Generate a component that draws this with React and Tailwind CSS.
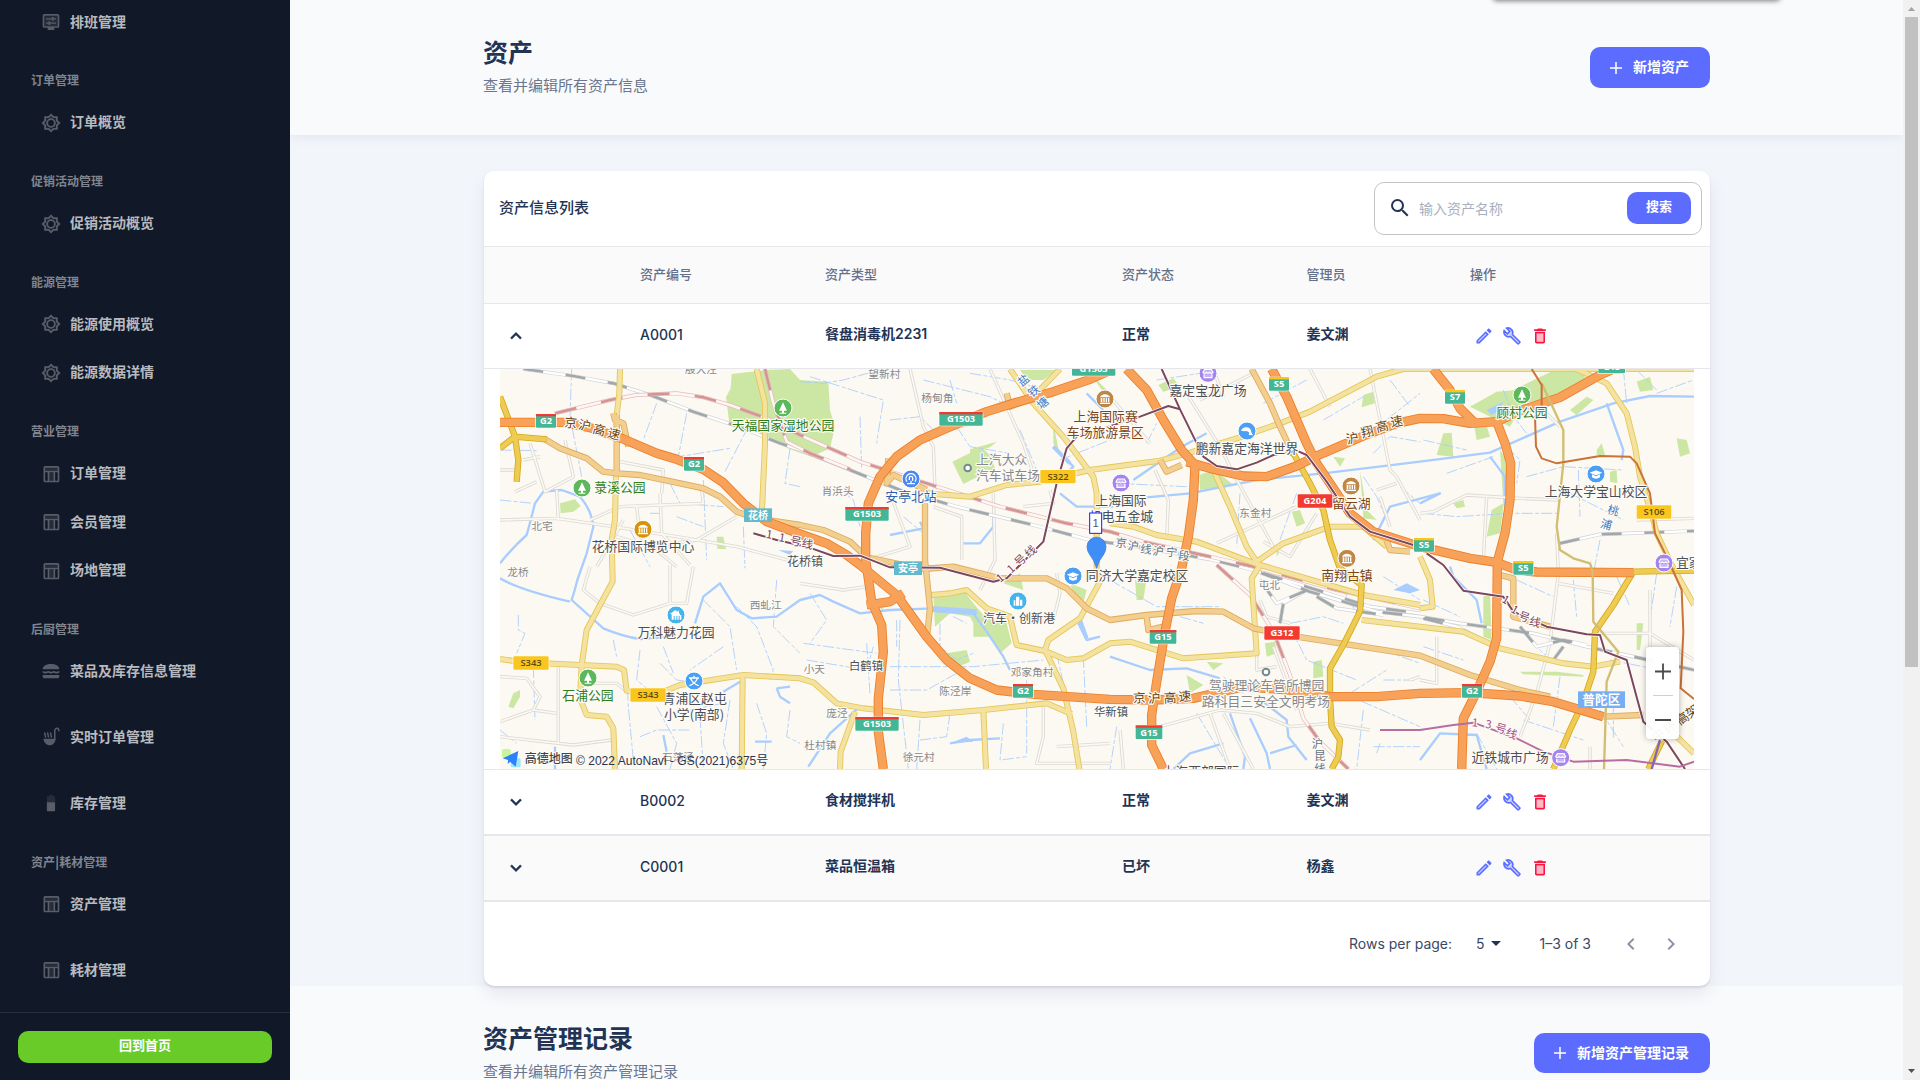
import React from "react";

/* ---------- icons ---------- */
const TwoTone = ({ children, className = "size-5" }) => (
  <svg viewBox="0 0 24 24" className={className} fill="currentColor">{children}</svg>
);
const Gear = () => (
  <TwoTone className="size-[20px]">
    <path d="M18 14.48V18h-3.52L12 20.48 9.52 18H6v-3.52L3.52 12 6 9.52V6h3.52L12 3.52 14.48 6H18v3.52L20.48 12z" opacity=".15" />
    <path d="M12 2.1 14.9 5H19v4.100L21.900 12 19 14.900V19h-4.100L12 21.900 9.100 19H5v-4.100L2.100 12 5 9.100V5h4.100z" fill="none" stroke="currentColor" strokeWidth="2.200" />
    <circle cx="12" cy="12" r="4.600" fill="#111827" stroke="currentColor" strokeWidth="2.200" />
  </TwoTone>
);
const Table = () => (
  <TwoTone className="size-[20px]">
    <path d="M4 4h17v4H4zM9.500 10h6v10h-6z" opacity=".3" />
    <path d="M20 2.500H5c-1.100 0-2 .9-2 2V20c0 1.100.9 2 2 2h15c1.100 0 2-.9 2-2V4.500c0-1.100-.9-2-2-2zm0 2v3.500H5V4.500h15zM15 20h-5V10h5v10zM5 10h3v10H5V10zm12 10V10h3v10h-3z" />
  </TwoTone>
);
const Display = () => (
  <TwoTone className="size-[20px]">
    <path d="M4 5h16v12H4z" opacity=".3" />
    <path d="M20 2.500H4c-1.100 0-2 .9-2 2V17c0 1.100.9 2 2 2h4v2.500h8V19h4c1.100 0 2-.9 2-2V4.500c0-1.100-.9-2-2-2zM20 17H4V4.500h16V17zM6 7.500h7V6h2v1.500h3V9h-3v1.500h-2V9H6zM6 12.500h3V11h2v1.500h7V14h-7v1.500H9V14H6z" />
  </TwoTone>
);
const Burger = () => (
  <TwoTone className="size-[20px]">
    <path d="M2 10C2 5.500 7 3.500 12 3.500s10 2 10 6.500zM2 16.800h20v1.700c0 1.200-.9 2.200-2 2.200H4c-1.100 0-2-1-2-2.200z" />
    <path d="M2 13c1.700 0 1.700 1 3.300 1s1.700-1 3.400-1 1.600 1 3.300 1 1.700-1 3.300-1 1.700 1 3.400 1 1.600-1 3.300-1" fill="none" stroke="currentColor" strokeWidth="2" />
  </TwoTone>
);
const Soup = () => (
  <TwoTone className="size-[20px]">
    <path d="M3 14h14.500c0 4-3 8-7 8S3 18 3 14z" />
    <path d="M16.500 15V5c0-2 1-3.500 2.700-3.500S21.500 3 21.500 5M5.500 12.500c0-2.500-1-2.500-1-6M9 12.500c0-2.500-1-2.500-1-6M12.500 12.500c0-2.500-1-2.500-1-6" fill="none" stroke="currentColor" strokeWidth="1.800" />
  </TwoTone>
);
const Battery = () => (
  <TwoTone className="size-[20px]">
    <path d="M17 5.300C17 4.600 16.400 4 15.700 4H14V2h-4v2H8.300C7.600 4 7 4.600 7 5.300V11h10V5.300z" opacity=".3" />
    <path d="M7 11v9.700c0 .7.6 1.300 1.300 1.300h7.300c.7 0 1.300-.6 1.300-1.300V11H7z" />
  </TwoTone>
);
const Edit = () => (
  <TwoTone>
    <path d="M5 18.080V19h.92l9.060-9.060-.92-.92z" opacity=".3" />
    <path d="M20.710 7.040c.39-.39.39-1.020 0-1.410l-2.340-2.340c-.2-.2-.45-.29-.71-.29s-.51.1-.7.29l-1.830 1.830 3.750 3.750 1.830-1.830zM3 17.250V21h3.750L17.810 9.940l-3.750-3.750L3 17.250zM5.920 19H5v-.92l9.060-9.060.92.92L5.920 19z" />
  </TwoTone>
);
const Wrench = () => (
  <TwoTone>
    <path d="M21.300 18.900l-8.700-8.700c.8-2.200.3-4.600-1.400-6.200C9.600 2.400 7.400 2 5.400 2.600L9.300 6.400 6.400 9.300 2.600 5.400C2 7.400 2.400 9.600 4 11.200c1.600 1.700 4 2.200 6.200 1.400l8.700 8.700c.3.3.6.3.9 0l1.500-1.500c.3-.3.3-.6 0-.9z" fillOpacity=".3" stroke="currentColor" strokeWidth="1.900" />
  </TwoTone>
);
const Trash = () => (
  <TwoTone>
    <path d="M8 9h8v10H8z" opacity=".3" />
    <path d="M15.500 4l-1-1h-5l-1 1H5v2h14V4zM6 19c0 1.100.9 2 2 2h8c1.100 0 2-.9 2-2V7H6v12zM8 9h8v10H8V9z" />
  </TwoTone>
);
const Plus = () => (
  <TwoTone className="size-[18px]"><path d="M20 13h-7v7h-2v-7H4v-2h7V4h2v7h7z" /></TwoTone>
);
const Chevron = ({ up }) => (
  <svg viewBox="0 0 24 24" className="size-[22px]" fill="currentColor" stroke="currentColor" strokeWidth=".5">
    {up ? <path d="M7.410 15.410 12 10.830l4.590 4.580L18 14l-6-6-6 6z" /> : <path d="M7.410 8.590 12 13.170l4.590-4.580L18 10l-6 6-6-6z" />}
  </svg>
);

/* ---------- sidebar ---------- */
const NAV = [
  ["item", "排班管理", Display, "mt-0"],
  ["head", "订单管理"],
  ["item", "订单概览", Gear, "mt-0"],
  ["head", "促销活动管理"],
  ["item", "促销活动概览", Gear, "mt-0"],
  ["head", "能源管理"],
  ["item", "能源使用概览", Gear, "mt-0"],
  ["item", "能源数据详情", Gear, "mt-[8.500px]"],
  ["head", "营业管理"],
  ["item", "订单管理", Table, "mt-0"],
  ["item", "会员管理", Table, "mt-[8.500px]"],
  ["item", "场地管理", Table, "mt-[8.500px]"],
  ["head", "后厨管理"],
  ["item", "菜品及库存信息管理", Burger, "mt-0"],
  ["item", "实时订单管理", Soup, "mt-[26px]"],
  ["item", "库存管理", Battery, "mt-[26px]"],
  ["head", "资产|耗材管理"],
  ["item", "资产管理", Table, "mt-0"],
  ["item", "耗材管理", Table, "mt-[26px]"],
];

function Sidebar() {
  return (
    <aside className="flex h-full w-[290px] shrink-0 flex-col bg-[#111827]">
      <nav className="flex h-[1012px] flex-col pt-[2px]">
        {NAV.map(([kind, label, Icon, gap], i) =>
          kind === "head" ? (
            <div key={i} className="mt-[16.500px] flex h-[44.300px] shrink-0 items-center pl-[31px] pt-px text-[12px] font-semibold text-[#7f848e]">{label}</div>
          ) : (
            <div key={i} className={"flex h-10 shrink-0 items-center gap-[9px] pl-[41px] text-[14px] font-bold text-[#b8babf] " + gap}>
              <span className="text-[#585d68]"><Icon /></span>
              <span className="-mt-[2px]">{label}</span>
            </div>
          )
        )}
      </nav>
      <div className="flex-1 border-t border-[#292f3d] px-[18px] pt-[18px]">
        <button className="flex h-8 w-full items-center justify-center rounded-[10px] bg-[#68cb27] pb-[2px] text-[13px] font-bold text-white">回到首页</button>
      </div>
    </aside>
  );
}

/* ---------- map ---------- */
const PARKS = [
  "M725 42 830 30 900 27 930 60 1015 65 1020 150 1035 200 1020 265 965 290 900 268 830 232 718 190 708 112 722 85z",
  "M1387 305 1475 262 1500 285 1515 325 1420 372z", "M1440 268 1520 245 1500 262 1440 282z",
  "M210 430 255 418 272 438 250 455 212 460z", "M680 530 700 530 708 568 682 566z",
  "M1330 708 1420 690 1450 730 1480 765 1550 790 1565 850 1530 880 1500 830 1450 830 1450 790 1440 770 1380 760 1335 800z",
  "M1370 880 1430 870 1440 905 1405 920z", "M1540 670 1590 640 1600 690z", "M1740 670 1790 690 1780 730 1750 700z",
  "M2128 345 2170 330 2200 350 2230 375 2130 390z", "M1935 660 1970 655 1960 720 1940 720z", "M2005 75 2050 55 2070 80 2020 95z",
  "M2620 105 2650 95 2655 130 2615 142z", "M2405 455 2430 450 2445 490 2420 500z", "M2325 850 2355 845 2360 880 2330 890z",
  "M2150 905 2200 910 2170 930z", "M2470 905 2495 900 2500 950 2470 955z", "M2090 945 2140 975 2100 1000z", "M2530 290 2565 295 2550 320z",
  "M2940 140 3020 95 3080 90 3100 130 3060 200 2990 165z", "M3070 90 3200 27 3270 27 3290 60 3170 120 3090 130z",
  "M2950 185 2985 180 3000 230 2960 240z", "M2860 220 2885 218 2890 290 2840 285z", "M3030 270 3050 300 3045 400 3030 520 2990 530 3005 450 3040 430z",
  "M3440 65 3480 50 3490 90 3450 95z", "M3240 150 3290 110 3310 120 3260 165z", "M3320 270 3335 250 3345 285 3320 285z", "M3360 335 3380 330 3382 370 3360 365z",
  "M3560 235 3590 240 3600 280 3570 290z", "M2980 710 3000 700 3005 840 2980 830z", "M3090 935 3200 935 3280 945 3280 950 3100 943z", "M3440 790 3460 790 3450 870 3440 870z",
  "M55 1040 70 1000 90 990 90 1010 70 1045z", "M2890 430 2920 420 2925 440 2900 445z", "M1170 740 1185 740 1175 750z", "M1800 40 1860 100 1850 110z",
  "M1690 190 1700 240 1710 290 1690 250z", "M1590 30 1700 30 1660 60 1610 60z", "M2360 560 2372 570 2360 590z", "M2610 330 2630 450 2660 480 2620 475z",
];
const WATER = [
  "M30 610Q70 560 110 525 120 490 135 430L160 395 215 390 270 410Q305 450 310 500L290 580 262 660Q255 690 245 720L340 805Q400 830 450 837L540 830",
  "M30 655Q90 690 240 725", "M615 790 640 710 690 670 740 750 785 775 860 770 930 720 990 705 1030 725 1110 760 1200 750 1330 745 1460 760",
  "M1450 760 1490 815 1540 890 1560 930", "M2650 540 2700 440 2850 400 2790 430", "M2790 305 3000 278 3210 185 3370 130 3480 108 3612 110",
  "M1970 412 2100 400 2300 360 2500 340 2790 305", "M1930 360 2075 260 2150 220", "M1860 890 1980 930 2090 925 2190 955", "M2280 1075 2330 1180 2340 1227",
  "M2220 1060 2265 1190 2260 1227", "M955 1220 1020 1120 1110 1040", "M1380 1150 1440 1140 1530 1135", "M2790 1200 2850 1120 2960 1125 2990 1227",
  "M2340 1180 2420 1155M2300 1010 2390 1080 2395 1130 2450 1200", "M1200 525 1300 505 1290 485M1420 550 1470 550 1510 500 1510 460", "M195 1160 195 1227",
  "M1790 100 1840 150M1690 260 1750 320 1720 350M1710 400 1760 440 1870 440M1765 790 1790 840 1830 830",
  "M3000 290 3045 350 3045 440M3350 130 3400 270 3395 300", "M520 1125 530 1175M700 995 750 965M860 985 900 980M795 1145 845 1145M2050 1227 2100 1180 2200 1150",
  "M860 985 870 1010 900 1030M2880 620 2890 650 2960 720 2975 790",
];
const STREAMS = [
  "M245 27 240 170 275 350M30 420 130 430M1230 780 1225 960 1255 1227",
  "M500 130 460 240M590 160 565 290 720 265M775 200 705 335M900 265 885 370 930 380M540 370 570 430 700 440M640 360 650 600M760 500 765 625M480 460 510 460M30 270 140 272M560 470 640 500M420 510 480 620",
  "M960 50 1180 120 1160 250M930 65 1000 70 1060 60 1180 27M1110 170 1115 330M1200 180 1290 170 1350 230M1440 40 1560 60 1700 100M1300 60 1500 110 1560 140M1590 210 1640 330M1400 200 1440 260 1560 280M1040 380 1090 420 1110 500M1240 470 1300 520M1380 60 1400 130M1710 300 1860 240",
  "M2000 60 2130 40 2160 60M2180 90 2250 70M2320 130 2450 60M2600 250 2790 100M2620 350 2660 410 2700 500M2500 180 2620 110M2250 400 2240 560M1880 370 2090 380M1970 250 2000 190M2650 280 2700 230 2790 245M2420 400 2370 540M2700 60 2760 140M2730 380 2790 430",
  "M2800 240 2930 270M2870 340 3010 290M2800 460 2900 470 3060 460 3210 460M3110 350 3220 320 3400 330M3040 90 3070 170 3110 220M3265 330 3270 470M3400 27 3410 130M3500 100 3610 60M3330 540 3310 640M3050 260 3090 300 3080 370M3240 400 3400 480M3440 30 3500 90",
  "M85 765 85 810 105 820 80 880M130 920 135 1080M30 1110 80 1150M410 930 415 1040 430 1200M450 870 440 960 500 1010M510 910 560 960 640 970M500 1040 560 1150 540 1227M640 720 720 800 740 930M740 740 800 800 850 930 840 960M860 660 850 800 930 880M700 860 600 930M520 860 550 940M630 1070 640 1227M720 1020 700 1150 730 1227M450 1130 500 1110 600 1110M800 1030 830 1120 820 1227M900 1050 890 1130 930 1150M370 840 380 890M600 1050 700 1030",
  "M940 850 1160 880M950 900 1130 930 1150 860M960 700 1010 780 960 850M1200 920 1450 920 1660 900M1200 990 1310 990 1400 940M1290 1080 1280 1227M1380 1060 1370 1130 1290 1140M1540 1090 1530 1200 1610 1190M1610 920 1610 1180M1130 850 1140 1000M1220 780 1220 860M1780 890 1790 1100M1350 790 1350 860 1400 900 1450 880M1390 770 1430 790M1700 880 1720 970",
  "M1860 660 2000 740 2190 740M2070 770 2140 790M2400 790 2500 770 2560 790M2400 800 2450 900 2600 960M2680 870 2790 910M2560 1000 2790 1100M2620 1050 2600 1227M2660 1180 2670 1150M2680 960 2780 960M2580 1000 2690 930M2600 760 2560 690M1880 1100 1860 1227M2120 1060 2220 1227M2200 950 2260 1000M2680 650 2790 720M2650 1160 2790 1160",
  "M2800 720 2910 770M3080 660 3190 710M3120 840 3180 900M2800 860 2920 900M3060 1010 3120 1080M3210 950 3190 1100M3330 1050 3400 1160M3360 900 3560 940M2960 1120 3020 1227M3250 660 3260 770M3380 650 3420 740M3500 640 3480 780M3560 680 3540 800M3100 1080 3280 1140M3370 1040 3370 1140",
];
const MINOR = [
  "M120 250 165 395 250 350 225 240M30 330 80 330M75 395 140 365M100 300 150 290M205 480 200 390M30 480 200 475 370 500 560 530 740 560 930 610",
  "M390 305 520 330 515 400M300 480 390 440 640 430 635 390M510 400 515 520 600 615M440 440 450 530 560 620M380 530 480 560 620 540 740 470M320 620 400 480M540 615 540 730 590 730 610 620M300 620 280 690 330 730 430 765 540 730",
  "M205 920 205 1150M30 1130 250 1155 365 1140M30 950 110 955 150 1010 130 1050 30 1085M130 1050 200 1060M290 970 380 970 410 995",
  "M1260 27 1300 200 1330 260 1335 390M1310 225 1560 120M1380 210 1480 180M1500 27 1550 140 1600 250 1640 370M1200 400 1260 560 1130 600M1330 440 1415 470 1415 600M1510 400 1515 600 1470 690M1600 440 1690 430 1680 390M930 670 1060 690 1130 680",
  "M1860 110 1980 250M2090 100 2190 260 2230 340 2350 560M2170 27 2200 110M2130 120 2290 40M2460 27 2520 140M2640 27 2700 330 2720 350 2790 480M2320 545 2400 590 2480 460M2660 390 2720 370M2670 410 2700 500M2180 550 2420 440M1995 330 2035 420 2030 540",
  "M2790 460 2830 455 2930 405 3090 415 3210 420M2990 410 2980 600M3200 520 3205 640 3180 850 3140 1000 3090 1130M3480 690 3480 900 3550 1000M3310 820 3480 820 3612 900M3205 670 3370 700M2840 830 2840 970 2790 960M3300 1160 3300 1227M3440 480 3612 475M3210 200 3170 160",
  "M2300 880 2300 930 2360 920M2010 1100 2190 1050 2300 1060 2400 1100 2520 1090 2640 1110M2160 1060 2220 1227M2200 1060 2290 1227M1660 1020 1660 1130 1640 1210 1860 1210M1700 1160 1860 1150M1890 1110 1900 1227M2760 960 2790 950M2540 625 2620 660M2310 720 2330 770 2400 790M2350 860 2420 1050M1700 640 1710 700 1690 780",
];
const LIGHT = [
  "M390 27 388 100 380 165M378 340 375 480 365 540 368 665 330 735 290 810 275 915 270 1015 290 1065 350 1070 370 1105 375 1227",
  "M30 897 100 907 270 915 380 920 402 930 410 992 440 1000 520 995 570 975 650 962 760 945 930 955 970 967 1040 1030 1120 1045 1300 1065 1480 1050 1670 1030 1745 1062",
  "M758 945 755 1227M800 27 825 130 825 250 815 470M1095 1055 1052 1175 1050 1227M1480 1050 1488 1227",
  "M1830 665 1770 775 1675 840 1665 870 1720 985 1750 1115 1768 1227M1665 873 1730 900 1780 895 1860 850 1920 845 2080 895 2300 880 2285 655 2310 615",
  "M1325 705 1380 700 1430 690 1490 745 1560 770 1580 855 1665 873",
  "M1280 390 1330 402 1440 410 1550 375 1650 365 1800 330 1860 322 2010 302 2100 278 2240 235 2370 190 2460 155 2660 50 2740 27",
  "M1560 27 1630 130 1720 230 1810 350 1820 400 1820 625 1830 670M1630 110 1710 27M2740 27 3612 27",
  "M1860 490 1930 500 2000 525 2120 545 2240 590 2300 612 2620 705 2790 735M2170 330 2220 440 2270 560 2300 605 2380 550 2520 500 2620 500 2690 560",
  "M3260 27 3350 70 3410 160 3435 260 3450 350 3490 480 3500 520 3545 615 3612 735M2615 780 2790 800 2920 815 3030 865 3220 910 3310 920 3390 905",
  "M2790 590 2820 660 2828 740 2790 745M3520 1090 3612 1180",
];
const SECOND = [
  "M160 235 210 265 290 295 340 335 380 340 450 345 560 368 640 385 690 410 740 455 800 475 930 495 1000 510 1080 545 1130 592 1300 627 1390 620 1530 655 1670 655 1730 685 1790 745 1860 780 1970 765 2120 753 2200 755 2290 805 2420 830 2790 887 2940 945 3090 990 3180 1010",
  "M370 160 375 180 400 190 415 260M380 165 380 340M1305 430 1305 600 1320 745 1310 840M1195 295 1190 370 1210 345 1310 390M1970 770 1975 810 2020 800M2010 300 2030 335 2075 315",
  "M1550 100 1560 140 1640 110M2285 27 2340 130 2370 200 2410 285M2690 540 2700 570 2760 575M3030 645 3070 655 3070 770 3180 800M3340 1070 3460 1065",
];
const STRONG = [
  "M30 110 75 230 85 300 80 365M30 265 75 230 100 232 170 238M2410 280 2460 370 2500 450 2520 540 2550 625 2615 675 2610 755 2560 855 2520 925 2520 1015 2525 1100 2550 1140 2545 1190 2525 1227",
  "M3612 632 3430 635 3370 735 3315 815 3310 935 3280 1025 3240 1110 3190 1227M3520 1135 3475 1227",
];
const MOTOR = [
  "M30 187 220 187 300 203 400 237 500 280 560 298 640 328 700 368 760 430 830 485 930 522 1010 550 1070 585 1110 615 1220 705 1310 830 1370 900 1440 955 1520 990 1630 1003 1860 1018 1990 1020 2110 1015 2260 980 2400 990 2520 1010 2660 1010 2790 1000 2940 998 3090 1008 3190 1025 3340 1070",
  "M1870 27 1800 58 1690 95 1570 130 1490 155 1380 200 1290 240 1220 290 1170 350 1135 430 1127 520 1127 600 1145 725 1175 795 1180 875 1165 1015 1165 1115 1180 1227M1130 735 1200 725 1240 700",
  "M1910 27 1970 90 2020 180 2075 270 2115 315 2110 420 2095 530 2075 625 2045 715 2025 815 2000 965 1985 1065 1985 1155 2020 1227",
  "M2345 27 2390 110 2450 250 2480 310 2540 400 2580 460 2650 515 2790 560 2940 595 3020 607 3080 630 3140 636 3430 638",
  "M2090 305 2160 325 2260 348 2330 350 2420 318 2480 288 2620 228 2720 190 2790 175 2860 176 2940 190 3020 185 3090 152 3210 112 3330 45 3370 27",
  "M2830 27 2880 90 2910 145 2950 185M3020 185 3045 250 3062 310 3060 420 3045 520 3022 605 3020 835 3000 905 2960 995 2920 1075 2915 1227",
];
const RAIL = [
  "M100 27 250 48 370 70 480 105 610 155 760 205 870 250 930 270 1080 330 1230 390 1400 440 1630 495 1800 540 1940 560 2160 598 2290 630 2460 695 2660 755 2790 770 2910 790 3130 820 3290 860 3430 890 3612 930",
  "M3210 550 3330 523 3612 513M2320 640 2450 680 2640 740 2790 760M2480 710 2540 745 2680 765M2370 790 2380 730 2450 690M2310 660 2360 730 2440 695M2800 775 2900 800 2960 830M3090 800 3140 860 3220 840 3290 855M3190 900 3220 860",
];
const RED = [
  "M195 160 360 120 440 105 560 100 640 112 720 135 830 175 930 225 1110 305 1310 370 1530 440 1730 490 1860 515 1960 545 2160 590 2290 620 2540 690 2790 745",
  "M825 27 850 130 890 245 960 280 1080 328M2180 615 2280 705 2350 815 2400 945 2440 1075 2490 1145 2575 1227",
];
const METRO = "M790 520 860 540 950 560 1030 588 1110 587 1200 622 1350 623 1510 665 1550 655 1590 615 1660 545 1700 370 1730 265 1760 230 1950 170 2035 138 2070 148 2015 27M2070 148 2140 290 2180 318 2240 328 2300 308 2350 285 2420 272 2450 285 2510 365 2580 470 2640 515 2770 555M2810 580 2860 615 2920 692 3040 710 3070 755 3170 800 3290 823 3330 825 3345 875 3410 900 3460 1085 3530 1145 3585 1227";

const BADGES = [
  ["G2", 168, 183, 60, "g"], ["G2", 612, 312, 60, "g"], ["G1503", 1413, 177, 130, "g"], ["G1503", 1131, 462, 130, "g"], ["G1503", 1811, 27, 130, "g"],
  ["S5", 2367, 72, 60, "s"], ["S7", 2895, 111, 60, "s"], ["S322", 1704, 350, 106, "y"], ["G204", 2475, 423, 104, "r"], ["S106", 3492, 456, 104, "y"],
  ["S5", 2802, 555, 60, "s"], ["S5", 3100, 624, 60, "s"], ["S343", 123, 909, 106, "y"], ["S343", 474, 1005, 106, "y"], ["G2", 1599, 993, 60, "g"],
  ["G1503", 1161, 1092, 130, "g"], ["G15", 2019, 831, 80, "g"], ["G15", 1977, 1117, 80, "g"], ["G312", 2376, 819, 106, "r"], ["G2", 2946, 993, 60, "g"], ["G15", 3365, 20, 80, "s"],
];
const D = "#4b4f55", V = "#85888c", P = "#2f7d1c", B = "#7b4519", BL = "#2a5fae";
const LABELS = [
  ["殷大泾", 633, 26, 32, V], ["天福国家湿地公园", 879, 195, 38.5, P], ["菉溪公园", 390, 381, 38.5, P], ["北宅", 156, 499, 32, V], ["花桥国际博览中心", 459, 558, 38.5, D],
  ["花桥镇", 945, 605, 36, D], ["望新村", 1183, 43, 32, V], ["杨甸角", 1342, 115, 32, V], ["肖浜头", 1043, 394, 32, V], ["安亭北站", 1263, 409, 38.5, BL],
  ["上汽大众", 1535, 298, 38.5, V], ["汽车试车场", 1554, 346, 38.5, V], ["上海国际赛", 1847, 169, 38.5, B], ["车场旅游景区", 1846, 216, 38.5, B],
  ["嘉定宝龙广场", 2154, 91, 38.5, D], ["鹏新嘉定海洋世界", 2271, 265, 38.5, D], ["上海国际", 1893, 420, 38.5, D], ["机电五金城", 1893, 468, 38.5, D],
  ["东金村", 2296, 460, 32, V], ["留云湖", 2584, 429, 38.5, B], ["顾村公园", 3096, 156, 38.5, P], ["上海大学宝山校区", 3318, 394, 38.5, D], ["宜家家居", 3635, 608, 38.5, D],
  ["龙桥", 84, 637, 32, V], ["万科魅力花园", 558, 817, 38.5, D], ["西虬江", 827, 736, 32, V], ["石浦公园", 294, 1006, 38.5, P], ["青浦区赵屯", 614, 1015, 38.5, D], ["小学(南部)", 612, 1063, 38.5, D],
  ["石荡泾", 564, 1192, 32, V], ["小天", 973, 928, 32, V], ["白鹤镇", 1128, 918, 34, D], ["陈泾岸", 1396, 992, 32, V], ["庞泾", 1041, 1058, 32, V], ["杜村镇", 991, 1156, 32, V],
  ["徐元村", 1286, 1192, 32, V], ["邓家角村", 1626, 937, 32, V], ["华新镇", 1863, 1055, 34, D], ["汽车・创新港", 1587, 776, 36, D], ["同济大学嘉定校区", 1941, 646, 38.5, D],
  ["屯北", 2338, 676, 32, V], ["南翔古镇", 2571, 646, 38.5, B], ["驾驶理论车管所博园", 2330, 976, 38.5, V], ["路科目三安全文明考场", 2328, 1024, 38.5, V],
  ["上海西部国际", 2133, 1235, 38.5, D], ["近铁城市广场", 3060, 1193, 38.5, D],
];
const ROTATED = [
  ["京", 242, 189, 5, "#6a4310"], ["沪", 284, 197, 10, "#6a4310"], ["高", 328, 211, 15, "#6a4310"], ["速", 372, 223, 15, "#6a4310"],
  ["沪", 2588, 235, -12, "#6a4310"], ["翔", 2632, 216, -14, "#6a4310"], ["高", 2676, 200, -14, "#6a4310"], ["速", 2720, 185, -10, "#6a4310"],
  ["京", 1948, 1014, -3, "#6a4310"], ["沪", 1993, 1015, -3, "#6a4310"], ["高", 2040, 1014, -3, "#6a4310"], ["速", 2085, 1010, -5, "#6a4310"],
  ["盐", 1600, 60, -40, "#3f78c0"], ["铁", 1631, 92, -40, "#3f78c0"], ["塘", 1658, 128, -40, "#3f78c0"], ["桃", 3370, 451, 15, "#3f78c0"], ["浦", 3349, 493, 15, "#3f78c0"],
  ["京", 1894, 548, 5, "#66707c"], ["沪", 1930, 557, 5, "#66707c"], ["线", 1968, 567, 5, "#66707c"], ["沪", 2005, 573, 5, "#66707c"], ["宁", 2045, 576, 5, "#66707c"], ["段", 2082, 586, 5, "#66707c"],
  ["1", 838, 522, 10, "#7a4159"], ["1", 876, 532, 10, "#7a4159"], ["号", 918, 543, 12, "#7a4159"], ["线", 952, 551, 12, "#7a4159"],
  ["1", 1530, 653, -40, "#7a4159"], ["1", 1562, 625, -42, "#7a4159"], ["号", 1590, 600, -42, "#7a4159"], ["线", 1621, 574, -42, "#7a4159"],
  ["1", 3048, 718, 30, "#7a4159"], ["1", 3075, 748, 30, "#7a4159"], ["号", 3103, 770, 20, "#7a4159"], ["线", 3135, 785, 15, "#7a4159"],
  ["1", 2955, 1087, 5, "#9d4f86"], ["3", 2996, 1092, 10, "#9d4f86"], ["号", 3033, 1105, 15, "#9d4f86"], ["线", 3065, 1120, 20, "#9d4f86"],
  ["沪", 2482, 1150, 0, "#66707c"], ["昆", 2490, 1187, 0, "#66707c"], ["线", 2490, 1225, 0, "#66707c"],
  ["中", 3505, 1125, -40, "#6a4310"], ["环", 3540, 1102, -38, "#6a4310"], ["高", 3578, 1076, -35, "#6a4310"], ["架", 3607, 1055, -35, "#6a4310"],
];
const PINS = [
  ["tree", 879, 144, "#5cb85a"], ["tree", 276, 384, "#5cb85a"], ["tree", 3096, 105, "#5cb85a"], ["tree", 294, 954, "#5cb85a"],
  ["hall", 459, 508, "#d89206"], ["hall", 1845, 117, "#c08646"], ["hall", 2583, 378, "#c08646"], ["hall", 2571, 595, "#c08646"], ["train", 1263, 357, "#4a87f0"],
  ["bag", 2154, 40, "#a484ee"], ["bag", 1893, 369, "#a484ee"], ["bag", 3522, 609, "#a484ee"], ["bag", 3212, 1193, "#a484ee"], ["fish", 2271, 213, "#4b9ff5"],
  ["cap", 3318, 342, "#4b9ff5"], ["cap", 1749, 648, "#4b9ff5"], ["house", 558, 765, "#45b4ec"], ["city", 1584, 723, "#45b4ec"], ["wen", 612, 963, "#4b9ff5"],
];
const GLYPH = {
  tree: <path d="M0-17 9 2 12 8H3V14H10V17H-10V14H-3V8H-12L-9 2z" fill="#fff" />,
  hall: <path d="M-15-5Q-12-13 0-14 12-13 15-5zM-13-3h5v13h-5zM-5-3h4v13h-4zM2-3h4v13H2zM9-3h4v13H9zM-15 11h30v4h-30z" fill="#fff" />,
  train: <path d="M-12 8A15 15 0 1 1 12 8M-5 3V-3A5 5 0 0 1 5-3V5M0 5V12M-12 14H12" fill="none" stroke="#fff" strokeWidth="4" />,
  bag: <path d="M-15-3-10-12H10L15-3Q10 3 5-3 0 3-5-3-10 3-15-3zM-12 3V13H12V3" fill="#fff" fillOpacity=".4" stroke="#fff" strokeWidth="3.500" />,
  fish: <path d="M-18-1Q-12-13 0-11 12-9 13 4L18 13 5 12 7 5Q0-3-8 1z" fill="#fff" />,
  cap: <path d="M-19-4 0-11 19-4 0 4zM-12 1V10Q0 18 12 10V1L0 7z" fill="#fff" />,
  city: <path d="M-13-2H-8V14H-13zM-6-13H4V14H-6zM6-4H13V14H6z" fill="#fff" />,
  house: <path d="M-18-3-2-15 5-9V-13H9V-6L12-3V0H16V14H11V3H8V14H4V3H1V14H-4V3H-7V14H-13V-2z" fill="#fff" />,
  wen: <path d="M0-16V-10M-15-9H15M-10-7Q-3 8 14 14M10-7Q3 8-14 14" fill="none" stroke="#fff" strokeWidth="4" />,
};
const FILLS = { g: "#43b795", s: "#43b795", y: "#fac61e", r: "#f23a31" };

function Road({ d, w, edge, fill, rim = 5 }) {
  return (
    <g fill="none" strokeLinejoin="round">
      {d.map((p, i) => <path key={i} d={p} stroke={edge} strokeWidth={w} />)}
      {d.map((p, i) => <path key={"f" + i} d={p} stroke={fill} strokeWidth={w - rim} />)}
    </g>
  );
}

function AreaMap() {
  return (
    <div className="relative ml-4 h-[400px] w-[1194px] overflow-hidden bg-[#fcf9f2]">
      <svg viewBox="30 27 3582 1200" className="block h-[400px] w-[1194px]" fontFamily='"Noto Sans CJK SC", sans-serif'>
        {PARKS.map((p, i) => <path key={i} d={p} fill="#cce6a3" />)}
        <g fill="none" stroke="#a8cdfe" strokeLinejoin="round">
          {STREAMS.map((p, i) => <path key={i} d={p} strokeWidth="3" strokeOpacity=".85" strokeDasharray="34 7 12 6" />)}
          {WATER.map((p, i) => <path key={i} d={p} strokeWidth="7" />)}
          <path d="M1320 747 1460 757" strokeWidth="18" />
          <path d="M1770 780 1790 835M1690 260 1740 310" strokeWidth="12" />
        </g>
        <path d="M2990 150 3040 125 3030 150 3005 165zM1380 1150 1430 1130 1450 1145zM2710 690 2750 670 2790 690 2760 700zM865 570 910 573 900 585z" fill="#a8cdfe" />
        <Road d={MINOR} w={10} edge="#dcd9d3" fill="#fbf9f4" />
        <Road d={RAIL} w={11} edge="#cfd1d3" fill="#fff" rim={4} />
        <g fill="none" stroke="#a2a7aa" strokeWidth="8">{RAIL.map((p, i) => <path key={i} d={p} strokeDasharray="60 68" />)}</g>
        <Road d={RED} w={12} edge="#e3bab8" fill="#fdf6f3" rim={4} />
        <g fill="none" stroke="#d59494" strokeWidth="8">{RED.map((p, i) => <path key={i} d={p} strokeDasharray="66 76" />)}</g>
        <Road d={LIGHT} w={18} edge="#e6c552" fill="#f3e2a0" />
        <Road d={SECOND} w={19} edge="#dfa95c" fill="#f2cf8e" />
        <Road d={STRONG} w={19} edge="#d5a71b" fill="#eecb52" />
        <Road d={MOTOR} w={28} edge="#ec7e28" fill="#f7a159" />
        <g fill="none" strokeLinejoin="round">
          <path d="M3155 70 3220 210 3220 310 3200 500 3210 570 3250 595 3300 610 3308 635 3310 785 3385 875 3350 965 3342 1227" stroke="#d2bd70" strokeWidth="7" />
          <path d="M3125 27 3155 75 3155 160 3135 170 3138 260 3155 295 3200 310 3330 288 3420 290 3440 310 3480 400 3495 520 3530 590 3575 690 3580 815 3572 985 3612 1017" stroke="#cb7236" strokeWidth="6" />
          <path d={METRO} stroke="#fff" strokeWidth="10" />
          <path d={METRO} stroke="#7c475c" strokeWidth="6" />
          <path d="M2670 1110 2790 1110 2890 1095 2950 1088 3080 1135 3160 1175 3250 1205 3410 1200 3570 1220 3612 1205" stroke="#b86da0" strokeWidth="6" />
          <path d="M3510 1140 3485 1227" stroke="#8465bd" strokeWidth="7" />
        </g>
        <circle cx="1433" cy="324" r="10" fill="#fff" stroke="#748a8c" strokeWidth="6" />
        <circle cx="2328" cy="936" r="10" fill="#fff" stroke="#748a8c" strokeWidth="6" />
        <g textAnchor="middle" paintOrder="stroke" stroke="#fdfbf6" strokeWidth="7" strokeLinejoin="round">
          {LABELS.map(([t, x, y, s, c]) => <text key={t + x} x={x} y={y + s * 0.36} fontSize={s} fill={c}>{t}</text>)}
          {ROTATED.map(([t, x, y, r, c], i) => (
            <text key={i} x={x} y={y + 13} fontSize={c === "#6a4310" ? 38 : 34} fill={c} transform={`rotate(${r} ${x} ${y})`}>{t}</text>
          ))}
        </g>
        {PINS.map(([k, x, y, c], i) => (
          <g key={i} transform={`translate(${x} ${y})`}>
            <circle r="27" fill={c} stroke="#fff" strokeWidth="3" />
            {GLYPH[k]}
          </g>
        ))}
        {BADGES.map(([t, x, y, w, k], i) => (
          <g key={i}>
            <rect x={x - w / 2 - 2} y={y - 22} width={w + 4} height="44" rx="4" fill="#fff" />
            <rect x={x - w / 2} y={y - 20} width={w} height="40" rx="3" fill={FILLS[k]} />
            {(k === "g" || k === "s") && <rect x={x - w / 2} y={y - 21} width={w} height="7" fill={k === "g" ? "#ee3a30" : "#fac61e"} />}
            <text x={x} y={y + 10} textAnchor="middle" fontFamily='"Open Sans", sans-serif' fontWeight={k === "y" ? 600 : 700} fontSize="28" fill={k === "y" ? "#5c4a10" : "#fff"}>{t}</text>
          </g>
        ))}
        <rect x="762" y="445" width="84" height="41" fill="#63b8c9" />
        <rect x="1212" y="604" width="84" height="41" fill="#63b8c9" />
        <rect x="3264" y="994" width="141" height="50" fill="#77adf2" />
        <g textAnchor="middle" fill="#fff" fontWeight="700">
          <text x="804" y="477" fontSize="30">花桥</text>
          <text x="1254" y="636" fontSize="30">安亭</text>
          <text x="3334" y="1033" fontSize="38">普陀区</text>
        </g>
        <rect x="1799" y="459" width="36" height="61" fill="#fff" stroke="#1a1aff" strokeWidth="3" />
        <text x="1817" y="501" fontSize="34" textAnchor="middle" fill="#555" fontFamily='"Liberation Sans", sans-serif'>1</text>
        <path d="M1820 625Q1812 600 1800 585 1791 573 1791 560A28 28 0 0 1 1848 560Q1848 573 1840 585 1827 600 1820 625z" fill="#3f8ef7" stroke="#2f6fd0" strokeWidth="2" />
        <rect x="36" y="1167" width="26" height="26" rx="5" fill="#c7f59b" />
        <rect x="62" y="1195" width="30" height="27" rx="5" fill="#9de6ff" />
        <path d="M38 1195 85 1173 77 1220 60 1205 53 1213 54 1200z" fill="#2b82fb" />
        <text x="104" y="1208" fontSize="36" fontWeight="500" fill="#444" stroke="#fff" strokeWidth="5" paintOrder="stroke">高德地图</text>
        <text x="258" y="1214" fontSize="37" textLength="577" lengthAdjust="spacingAndGlyphs" fill="#2b344e" fontFamily='"Liberation Sans", "Noto Sans CJK SC", sans-serif'>© 2022 AutoNavi - GS(2021)6375号</text>
      </svg>
      <div className="absolute right-[15px] top-[278px] flex h-[92px] w-[33px] flex-col items-center justify-between rounded-sm bg-white/95 pb-[9px] pt-[14px] text-[#4a4a4a] shadow-[0_0_6px_rgba(0,0,0,0.3)]">
        <svg viewBox="0 0 20 20" className="size-5" stroke="currentColor" strokeWidth="1.800"><path d="M2 10.500h16M10 2.500v16" /></svg>
        <span className="h-px w-5 bg-[#d0d0d0]" />
        <svg viewBox="0 0 20 20" className="size-5" stroke="currentColor" strokeWidth="2"><path d="M2 10h16" /></svg>
      </div>
    </div>
  );
}

/* ---------- table ---------- */
const COLS = "grid grid-cols-[156px_185px_297px_184.500px_163.500px_1fr] items-center";
const ROWS = [
  { id: "A0001", type: "餐盘消毒机2231", state: "正常", who: "姜文渊", open: true, cls: "h-[65px] border-b" },
  { id: "B0002", type: "食材搅拌机", state: "正常", who: "姜文渊", cls: "h-[67px] border-b-2 border-t" },
  { id: "C0001", type: "菜品恒温箱", state: "已坏", who: "杨鑫", cls: "h-[66px] border-b-2 bg-[#fafafb]" },
];

const Row = ({ r }) => (
  <>
    <div className={COLS + " border-[#e6e7ec] text-[14px] font-semibold text-[#223354] " + r.cls}>
      <span className="pl-[21px]"><Chevron up={r.open} /></span>
      <span className="-mt-[4px] font-medium">{r.id}</span>
      <span className="-mt-[5px]">{r.type}</span>
      <span className="-mt-[5px]">{r.state}</span>
      <span className="-mt-[5px]">{r.who}</span>
      <span className="flex gap-2 pl-[4px] text-[#5b6eff]">
        <Edit />
        <Wrench />
        <span className="text-[#fb1541]"><Trash /></span>
      </span>
    </div>
    {r.open && <AreaMap />}
  </>
);

const PageHead = ({ title, sub, action, cls, btn }) => (
  <header className={"flex justify-between bg-[#f9fafc] pl-[193px] pr-[193px] " + cls}>
    <div>
      <h1 className="text-[25px] font-bold leading-[34px] text-[#223354]">{title}</h1>
      <p className="text-[15px] leading-[31px] text-[#6b768f]">{sub}</p>
    </div>
    <button className={"flex items-center gap-[8px] rounded-[10px] bg-[#5b6cff] pl-[17px] text-[14px] font-bold text-white " + btn}>
      <Plus />
      <span className="-mt-[2px]">{action}</span>
    </button>
  </header>
);

export default function App() {
  return (
    <div className={'flex h-[1080px] w-[1920px] overflow-hidden bg-[#f2f5fa] font-[Inter,"Noto_Sans_CJK_SC",sans-serif]'}>
      <Sidebar />
      <main className="relative flex h-full w-[1613px] flex-col overflow-hidden">
        <div className="absolute -top-5 left-[1203px] h-5 w-[287px] rounded-sm bg-white shadow-[0_1px_5px_rgba(0,0,0,0.5)]" />
        <PageHead title="资产" sub="查看并编辑所有资产信息" action="新增资产" cls="h-[135px] shrink-0 pt-[36px] shadow-[0_2px_10px_rgba(159,162,191,0.18)]" btn="mt-[11px] h-[41px] w-[120px]" />
        <section className="relative z-10 ml-[194px] mt-9 h-[815px] w-[1226px] shrink-0 overflow-hidden rounded-[10px] bg-white shadow-[0_9px_16px_rgba(159,162,191,0.18),0_2px_2px_rgba(159,162,191,0.32)]">
          <div className="flex h-[76px] items-center justify-between border-b border-[#e6e7ec] pl-[15px] pr-2">
            <h2 className="text-[15px] font-medium text-[#223354]">资产信息列表</h2>
            <div className="flex h-[53px] w-[328px] items-center rounded-[10px] border border-[#c2c3c7] pl-[13px] pr-[10px]">
              <svg viewBox="0 0 24 24" className="-mt-[2px] size-6" fill="#223354"><path d="M15.500 14h-.79l-.28-.27A6.471 6.471 0 0 0 16 9.500 6.500 6.500 0 1 0 9.500 16c1.610 0 3.090-.59 4.230-1.570l.27.28v.79l5 4.990L20.490 19l-4.990-5zm-6 0C7.010 14 5 11.990 5 9.500S7.010 5 9.500 5 14 7.010 14 9.500 11.990 14 9.500 14z" /></svg>
              <span className="flex-1 pl-[7px] text-[14px] text-[#a9afbc]">输入资产名称</span>
              <button className="-mt-[2px] flex h-8 w-16 items-center justify-center rounded-[10px] bg-[#5b6cff] pb-px text-[13px] font-bold text-white">搜索</button>
            </div>
          </div>
          <div className={COLS + " h-[57px] border-b border-[#e6e7ec] bg-[#fafafb] text-[13px] font-medium text-[#65708a]"}>
            <span />
            <span>资产编号</span>
            <span>资产类型</span>
            <span>资产状态</span>
            <span>管理员</span>
            <span>操作</span>
          </div>
          {ROWS.map((r) => <Row key={r.id} r={r} />)}
          <div className="flex h-[83px] items-center justify-end pr-[27px] text-[14px] text-[#3b4965]">
            <span>Rows per page:</span>
            <span className="ml-[24px]">5</span>
            <svg viewBox="0 0 10 5" className="ml-[6px] h-[5px] w-[10px]" fill="#223354"><path d="M0 0h10L5 5z" /></svg>
            <span className="ml-[39px]">1–3 of 3</span>
            <svg viewBox="0 0 24 24" className="ml-[28px] size-6" fill="#8b93a5"><path d="M15.410 7.410 14 6l-6 6 6 6 1.410-1.410L10.830 12z" /></svg>
            <svg viewBox="0 0 24 24" className="ml-[16px] size-6" fill="#8b93a5"><path d="M10 6 8.590 7.410 13.170 12l-4.580 4.590L10 18l6-6z" /></svg>
          </div>
        </section>
        <PageHead title="资产管理记录" sub="查看并编辑所有资产管理记录" action="新增资产管理记录" cls="h-[140px] shrink-0 pt-[36px]" btn="mt-[11px] h-[40px] w-[176px]" />
      </main>
      <div className="flex h-full w-[17px] flex-col items-center bg-[#f1f1f1]">
        <svg viewBox="0 0 17 17" className="h-[17px] w-[17px] shrink-0" fill="#a3a3a3"><path d="M5 11h7L8.500 7z" /></svg>
        <div className="h-[650px] w-[13px] bg-[#c1c1c1]" />
        <div className="flex-1" />
        <svg viewBox="0 0 17 17" className="h-[17px] w-[17px] shrink-0" fill="#505050"><path d="M5 6h7L8.500 10z" /></svg>
      </div>
    </div>
  );
}
